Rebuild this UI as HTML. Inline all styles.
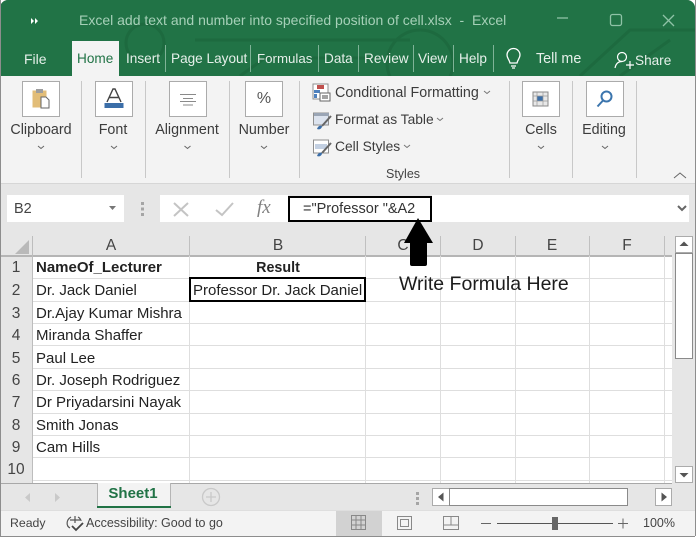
<!DOCTYPE html>
<html><head><meta charset="utf-8">
<style>
html,body{margin:0;padding:0;background:#fff;}
#p{position:relative;width:700px;height:540px;overflow:hidden;background:#fff;font-family:"Liberation Sans",sans-serif;}
#p div,#p span{position:absolute;}
.t{white-space:nowrap;line-height:18px;height:18px;}
.c{transform:translateX(-50%);text-align:center;}
.tab{color:#e6f0ea;font-size:13.6px;top:50px;}
.rl{color:#3c3c3c;font-size:14.3px;top:121px;}
.ib{background:#fff;border:1px solid #ababab;width:36px;height:34px;top:81px;box-sizing:content-box;}
.sep{background:#c8c8c8;width:1px;top:81px;height:97px;}
.gs{background:#7fb397;width:1px;top:45px;height:27px;}
.cell{color:#222;font-size:15px;left:36px;}
.rn{color:#444;font-size:15.5px;left:0;width:32px;text-align:center;}
.h{background:#dedede;height:1px;left:33px;width:639px;}
.v{background:#dedede;width:1px;top:256px;height:227px;}
.ch{color:#444;font-size:15.5px;top:237px;}
.vh{background:#c0c0c0;width:1px;top:236px;height:20px;}
</style></head>
<body><div id="p">
<!-- window frame -->
<div style="left:0;top:0;width:695px;height:537px;background:#f3f3f3;border-radius:8px;overflow:hidden;box-shadow:0 0 0 1px #8d8d8d inset;"></div>
<!-- title -->
<div style="left:0;top:0;width:695px;height:76px;background:#217346;border-radius:8px 8px 0 0;"></div>
<svg style="position:absolute;left:120px;top:0" width="575" height="76" fill="none" stroke="#1d6a3f" stroke-width="3">
<circle cx="25" cy="43" r="19"/><path d="M75 40H290M120 76L145 58H260M300 30a33 33 0 1 0 .1 0M460 76L510 30H575M500 76L550 40"/>
</svg>
<svg style="position:absolute;left:30px;top:17px" width="10" height="8"><path d="M1 1l3 3-3 3zM5 1l3 3-3 3z" fill="#fff"/></svg>
<div class="t" style="left:79px;top:11px;font-size:14px;color:#a6d0b8;">Excel add text and number into specified position of cell.xlsx&nbsp; -&nbsp; Excel</div>
<svg style="position:absolute;left:550px;top:8px" width="140" height="24" fill="none" stroke="#8fc2a6" stroke-width="1.3">
<path d="M7 10H18"/><rect x="60.500" y="6.500" width="11" height="11" rx="2"/><path d="M113 7L124 18M124 7L113 18"/>
</svg>
<!-- tabs -->
<div class="t tab" style="left:24px;font-size:14px;">File</div>
<div style="left:72px;top:41px;width:47px;height:36px;background:#f3f3f3;"></div>
<div class="t tab" style="left:77px;color:#217346;">Home</div>
<div class="t tab" style="left:126px;">Insert</div><div class="gs" style="left:165px;"></div>
<div class="t tab" style="left:171px;">Page Layout</div><div class="gs" style="left:250px;"></div>
<div class="t tab" style="left:257px;font-size:13.3px;">Formulas</div><div class="gs" style="left:318px;"></div>
<div class="t tab" style="left:324px;">Data</div><div class="gs" style="left:358px;"></div>
<div class="t tab" style="left:364px;">Review</div><div class="gs" style="left:413px;"></div>
<div class="t tab" style="left:418px;">View</div><div class="gs" style="left:453px;"></div>
<div class="t tab" style="left:459px;">Help</div><div class="gs" style="left:493px;"></div>
<svg style="position:absolute;left:504px;top:47px" width="20" height="24" fill="none" stroke="#fff" stroke-width="1.3"><path d="M6 16C5 12 3 11 3 8a6.500 6.500 0 0 1 13 0c0 3-2 4-3 8zM7 19h5M8 21h3"/></svg>
<div class="t tab" style="left:536px;font-size:14.3px;">Tell me</div>
<svg style="position:absolute;left:613px;top:50px" width="24" height="20" fill="none" stroke="#fff" stroke-width="1.2"><circle cx="9" cy="7" r="4.500"/><path d="M2 18c1-5 4-6.500 7-6.500M13 15h8M17 11v8"/></svg>
<div class="t tab" style="left:635px;top:52px;">Share</div>
<!-- ribbon -->
<div style="left:1px;top:76px;width:694px;height:107px;background:#f3f3f3;"></div>
<div style="left:1px;top:183px;width:694px;height:1px;background:#d6d6d6;"></div>
<div class="ib" style="left:22px;"></div>
<svg style="position:absolute;left:30px;top:88px" width="22" height="22"><rect x="2.500" y="2.500" width="14" height="17" fill="#e2bd78"/><rect x="6" y="1" width="7" height="4" fill="#9d9d9d"/><path d="M11 9h5l3 3v8h-8z" fill="#fff" stroke="#666" stroke-width="1"/></svg>
<div class="t rl c" style="left:41px;">Clipboard</div>
<div class="ib" style="left:95px;"></div>
<svg style="position:absolute;left:103px;top:87px" width="22" height="22"><path d="M4 15L10 2h2l6 13M6.500 10.500h9" fill="none" stroke="#444" stroke-width="1.400"/><rect x="1.500" y="16" width="19" height="5" fill="#3b6ea8"/></svg>
<div class="t rl c" style="left:113px;">Font</div>
<div class="ib" style="left:169px;"></div>
<svg style="position:absolute;left:178px;top:92px" width="20" height="14" stroke="#8a8a8a" stroke-width="1"><path d="M2 2.500H18M5 6.500H15M2 9.500H18M5 13H15"/></svg>
<div class="t rl c" style="left:187px;">Alignment</div>
<div class="ib" style="left:245px;"></div>
<div class="t c" style="left:264px;top:90px;font-size:16px;color:#555;">%</div>
<div class="t rl c" style="left:264px;">Number</div>
<svg style="position:absolute;left:0;top:140px" width="700" height="12" fill="none" stroke="#666" stroke-width="1"><path d="M38 6l3 2.500 3-2.500M111 6l3 2.500 3-2.500M184.500 6l3 2.500 3-2.500M261 6l3 2.500 3-2.500M538 6l3 2.500 3-2.500M602 6l3 2.500 3-2.500"/></svg>
<div class="sep" style="left:81px;"></div><div class="sep" style="left:145px;"></div><div class="sep" style="left:229px;"></div><div class="sep" style="left:299px;"></div>
<div class="sep" style="left:509px;"></div><div class="sep" style="left:572px;"></div><div class="sep" style="left:636px;"></div>
<svg style="position:absolute;left:312px;top:83px" width="20" height="20"><rect x="1" y="1" width="15" height="15" fill="#fff" stroke="#8f8f8f"/><rect x="5" y="2" width="7" height="4" fill="#c0504d"/><rect x="2" y="7" width="6" height="3" fill="#4f81bd"/><rect x="2" y="11" width="3" height="4" fill="#4f81bd"/><rect x="8" y="10" width="10" height="8" fill="#fff" stroke="#666"/><path d="M10 13h6M10 15h6" stroke="#444"/></svg>
<div class="t" style="left:335px;top:84px;font-size:14.3px;color:#3c3c3c;">Conditional Formatting</div>
<svg style="position:absolute;left:312px;top:111px" width="21" height="20"><rect x="1.500" y="2" width="15" height="12" fill="#dce3ee" stroke="#8f8f8f"/><rect x="2" y="2" width="15" height="3" fill="#9aa5b5"/><path d="M19 5L10 15" stroke="#666" stroke-width="2"/><path d="M5 18c1-3 3-4 5-3 0 3-3 4-5 3z" fill="#3b6ea8"/></svg>
<div class="t" style="left:335px;top:111px;font-size:13.8px;color:#3c3c3c;">Format as Table</div>
<svg style="position:absolute;left:312px;top:138px" width="21" height="20"><rect x="1.500" y="2" width="15" height="13" fill="#fff" stroke="#8f8f8f"/><rect x="3" y="6" width="12" height="5" fill="#c3d0e2"/><path d="M19 5L10 15" stroke="#666" stroke-width="2"/><path d="M5 18c1-3 3-4 5-3 0 3-3 4-5 3z" fill="#3b6ea8"/></svg>
<div class="t" style="left:335px;top:138px;font-size:13.8px;color:#3c3c3c;">Cell Styles</div>
<svg style="position:absolute;left:0;top:85px" width="500" height="70" fill="none" stroke="#777" stroke-width="1"><path d="M484 6l3 2.500 3-2.500M437 33l3 2.500 3-2.500M404 60l3 2.500 3-2.500"/></svg>
<div class="t c" style="left:403px;top:165px;font-size:12.500px;color:#444;">Styles</div>
<div class="ib" style="left:522px;"></div>
<svg style="position:absolute;left:531px;top:89px" width="20" height="20"><rect x="2" y="3" width="15" height="14" fill="#e8e8e8" stroke="#888"/><rect x="6" y="7" width="6" height="5" fill="#3b6ea8"/><path d="M2 7H17M2 12H17M6 3V17M12 3V17" stroke="#999" stroke-width=".7"/></svg>
<div class="t rl c" style="left:541px;">Cells</div>
<div class="ib" style="left:586px;"></div>
<svg style="position:absolute;left:594px;top:88px" width="22" height="22" fill="none" stroke="#3b75ad" stroke-width="2"><circle cx="12.500" cy="8.500" r="5"/><path d="M9 12.500L3.500 18.500"/></svg>
<div class="t rl c" style="left:604px;">Editing</div>
<svg style="position:absolute;left:672px;top:170px" width="16" height="10" fill="none" stroke="#666" stroke-width="1"><path d="M2 8l6-5 6 5"/></svg>
<!-- formula bar -->
<div style="left:1px;top:184px;width:694px;height:52px;background:#e6e6e6;"></div>
<div style="left:7px;top:195px;width:117px;height:27px;background:#fff;border:0;"></div>
<div class="t" style="left:14px;top:200px;font-size:14.500px;color:#444;">B2</div>
<svg style="position:absolute;left:108px;top:205px" width="10" height="6"><path d="M1 1h7l-3.500 4z" fill="#777"/></svg>
<svg style="position:absolute;left:140px;top:201px" width="5" height="16" fill="#a5a5a5"><rect x="1" y="1" width="3" height="3"/><rect x="1" y="6.500" width="3" height="3"/><rect x="1" y="12" width="3" height="3"/></svg>
<div style="left:160px;top:195px;width:128px;height:27px;background:#fff;"></div>
<svg style="position:absolute;left:170px;top:200px" width="66" height="18" fill="none" stroke="#c4c4c4" stroke-width="2"><path d="M4 3L18 16M18 3L4 16M46 10l6 5 11-12"/></svg>
<div class="t" style="left:257px;top:199px;font-family:'Liberation Serif',serif;font-style:italic;font-size:19px;color:#808080;">fx</div>
<div style="left:432px;top:195px;width:257px;height:27px;background:#fff;"></div>
<div style="left:288px;top:196px;width:144px;height:26px;background:#fff;border:2px solid #000;box-sizing:border-box;"></div>
<div class="t" style="left:303px;top:200px;font-size:14.500px;color:#333;">="Professor "&amp;A2</div>
<svg style="position:absolute;left:676px;top:204px" width="12" height="9" fill="none" stroke="#666" stroke-width="2"><path d="M2 2l4 4 4-4"/></svg>
<!-- grid -->
<div style="left:1px;top:236px;width:694px;height:300px;background:#e6e6e6;"></div>
<div style="left:33px;top:256px;width:639px;height:227px;background:#fff;"></div>
<div style="left:1px;top:236px;width:664px;height:20px;background:#e6e6e6;"></div>
<div style="left:1px;top:255px;width:671px;height:2px;background:#b5b5b5;"></div>
<svg style="position:absolute;left:14px;top:239px" width="16" height="16"><path d="M15 1V15H1z" fill="#b9b9b9"/></svg>
<div class="vh" style="left:32px;"></div><div class="vh" style="left:189px;"></div><div class="vh" style="left:365px;"></div><div class="vh" style="left:440px;"></div><div class="vh" style="left:515px;"></div><div class="vh" style="left:589px;"></div><div class="vh" style="left:664px;"></div>
<div class="t ch c" style="left:111px;">A</div>
<div class="t ch c" style="left:278px;">B</div>
<div class="t ch c" style="left:403px;">C</div>
<div class="t ch c" style="left:478px;">D</div>
<div class="t ch c" style="left:552px;">E</div>
<div class="t ch c" style="left:627px;">F</div>
<div style="left:32px;top:236px;width:1px;height:247px;background:#bdbdbd;"></div>
<div class="h" style="top:278px;"></div><div class="h" style="top:301px;"></div><div class="h" style="top:323px;"></div><div class="h" style="top:345px;"></div><div class="h" style="top:368px;"></div><div class="h" style="top:390px;"></div><div class="h" style="top:413px;"></div><div class="h" style="top:435px;"></div><div class="h" style="top:457px;"></div><div class="h" style="top:480px;"></div>
<div class="v" style="left:189px;"></div><div class="v" style="left:365px;"></div><div class="v" style="left:440px;"></div><div class="v" style="left:515px;"></div><div class="v" style="left:589px;"></div><div class="v" style="left:664px;"></div>
<div class="t rn" style="top:259px;">1</div><div class="t rn" style="top:282px;">2</div><div class="t rn" style="top:305px;">3</div><div class="t rn" style="top:327px;">4</div><div class="t rn" style="top:350px;">5</div><div class="t rn" style="top:372px;">6</div><div class="t rn" style="top:394px;">7</div><div class="t rn" style="top:417px;">8</div><div class="t rn" style="top:439px;">9</div><div class="t rn" style="top:461px;">10</div>
<div class="t cell" style="top:259px;font-weight:bold;font-size:15px;">NameOf_Lecturer</div>
<div class="t cell c" style="top:259px;left:278px;font-weight:bold;font-size:14.3px;">Result</div>
<div class="t cell" style="top:282px;">Dr. Jack Daniel</div>
<div class="t cell" style="top:305px;">Dr.Ajay Kumar Mishra</div>
<div class="t cell" style="top:327px;">Miranda Shaffer</div>
<div class="t cell" style="top:350px;">Paul Lee</div>
<div class="t cell" style="top:372px;">Dr. Joseph Rodriguez</div>
<div class="t cell" style="top:394px;">Dr Priyadarsini Nayak</div>
<div class="t cell" style="top:417px;">Smith Jonas</div>
<div class="t cell" style="top:439px;">Cam Hills</div>
<div style="left:189px;top:277px;width:177px;height:25px;border:2px solid #000;box-sizing:border-box;background:#fff;"></div>
<div class="t cell" style="left:193px;top:282px;">Professor Dr. Jack Daniel</div>
<!-- annotation -->
<svg style="position:absolute;left:403px;top:218px" width="32" height="50"><path d="M15 0L30 25H24V46Q24 48 22 48H9Q7 48 7 46V25H1z" fill="#000"/></svg>
<div class="t" style="left:399px;top:274px;font-size:19.5px;height:20px;line-height:20px;color:#1c1c1c;">Write Formula Here</div>
<!-- v scrollbar -->
<div style="left:672px;top:236px;width:23px;height:247px;background:#e6e6e6;"></div>
<div style="left:675px;top:236px;width:18px;height:17px;background:#fff;border:1px solid #ababab;box-sizing:border-box;"></div>
<svg style="position:absolute;left:679px;top:241px" width="10" height="6"><path d="M5 0.500L9.500 5H.5z" fill="#555"/></svg>
<div style="left:675px;top:253px;width:18px;height:106px;background:#fff;border:1px solid #8a8a8a;box-sizing:border-box;"></div>
<div style="left:675px;top:466px;width:18px;height:17px;background:#fff;border:1px solid #ababab;box-sizing:border-box;"></div>
<svg style="position:absolute;left:679px;top:472px" width="10" height="6"><path d="M.5 1H9.500L5 5.500z" fill="#555"/></svg>
<!-- sheet tabs -->
<div style="left:1px;top:483px;width:671px;height:1px;background:#a8a8a8;"></div>
<svg style="position:absolute;left:24px;top:491px" width="36" height="12" fill="#c9c9c9"><path d="M6 2v9L1 6.500zM31 2v9l5-4.500z"/></svg>
<div style="left:97px;top:483px;width:74px;height:24px;background:#f3f3f3;border-left:1px solid #b5b5b5;border-right:1px solid #b5b5b5;box-sizing:border-box;"></div>
<div style="left:97px;top:506px;width:74px;height:2px;background:#217346;"></div>
<div class="t c" style="left:133px;top:485px;font-size:15px;font-weight:bold;color:#217346;">Sheet1</div>
<svg style="position:absolute;left:201px;top:487px" width="20" height="20" fill="none" stroke="#c9c9c9" stroke-width="1.300"><circle cx="10" cy="10" r="8.500"/><path d="M5 10H15M10 5V15"/></svg>
<svg style="position:absolute;left:415px;top:491px" width="6" height="15" fill="#a5a5a5"><rect x="1" y="1" width="3" height="3"/><rect x="1" y="6" width="3" height="3"/><rect x="1" y="11" width="3" height="3"/></svg>
<div style="left:432px;top:488px;width:18px;height:18px;background:#fff;border:1px solid #ababab;box-sizing:border-box;"></div>
<svg style="position:absolute;left:437px;top:492px" width="8" height="10"><path d="M6.500 .5V9.500L1 5z" fill="#555"/></svg>
<div style="left:449px;top:488px;width:179px;height:18px;background:#fff;border:1px solid #8a8a8a;box-sizing:border-box;"></div>
<div style="left:655px;top:488px;width:17px;height:18px;background:#fff;border:1px solid #ababab;box-sizing:border-box;"></div>
<svg style="position:absolute;left:660px;top:492px" width="8" height="10"><path d="M1.500 .5V9.500L7 5z" fill="#555"/></svg>
<!-- status -->
<div style="left:1px;top:510px;width:694px;height:26px;background:#f3f3f3;"></div>
<div style="left:1px;top:510px;width:694px;height:1px;background:#dedede;"></div>
<div style="left:336px;top:511px;width:46px;height:25px;background:#d2d2d2;"></div>
<div class="t" style="left:10px;top:514px;font-size:12.300px;color:#444;">Ready</div>
<svg style="position:absolute;left:65px;top:515px" width="22" height="18" fill="none" stroke="#555" stroke-width="1.200"><path d="M6 2C1 5 1 11 5 13M13 2c2 1 3 3 3 4M5 5h10M10 1v7"/><path d="M7 11l4 4 7-7" stroke="#444" stroke-width="1.800"/></svg>
<div class="t" style="left:86px;top:514px;font-size:12.500px;color:#444;">Accessibility: Good to go</div>
<svg style="position:absolute;left:350px;top:514px" width="130" height="18" fill="none" stroke="#888" stroke-width="1">
<path d="M1.500 1.500H15.500V15.500H1.500zM1.500 6H15.500M1.500 11H15.500M6 1.500V15.500M11 1.500V15.500"/>
<rect x="47.500" y="2.500" width="14" height="13"/><rect x="50.500" y="5.500" width="8" height="7"/>
<path d="M93.500 2.500H108.500V15.500H93.500zM93.500 11H108.500M101 2.500V11"/>
</svg>
<div style="left:481px;top:523px;width:10px;height:1px;background:#666;"></div>
<div style="left:497px;top:523px;width:116px;height:1px;background:#555;"></div>
<div style="left:552px;top:517px;width:6px;height:13px;background:#666;"></div>
<svg style="position:absolute;left:617px;top:517px" width="12" height="12" stroke="#666"><path d="M1 6.500H11M6 1.500V11.500"/></svg>
<div class="t" style="left:643px;top:514px;font-size:12.500px;color:#444;">100%</div>
<div style="left:0;top:536px;width:695px;height:1px;background:#8d8d8d;"></div>
<div style="left:0;top:0;width:1px;height:536px;background:#8d8d8d;"></div>
<div style="left:695px;top:0;width:1px;height:536px;background:#8d8d8d;"></div>
</div></body></html>
